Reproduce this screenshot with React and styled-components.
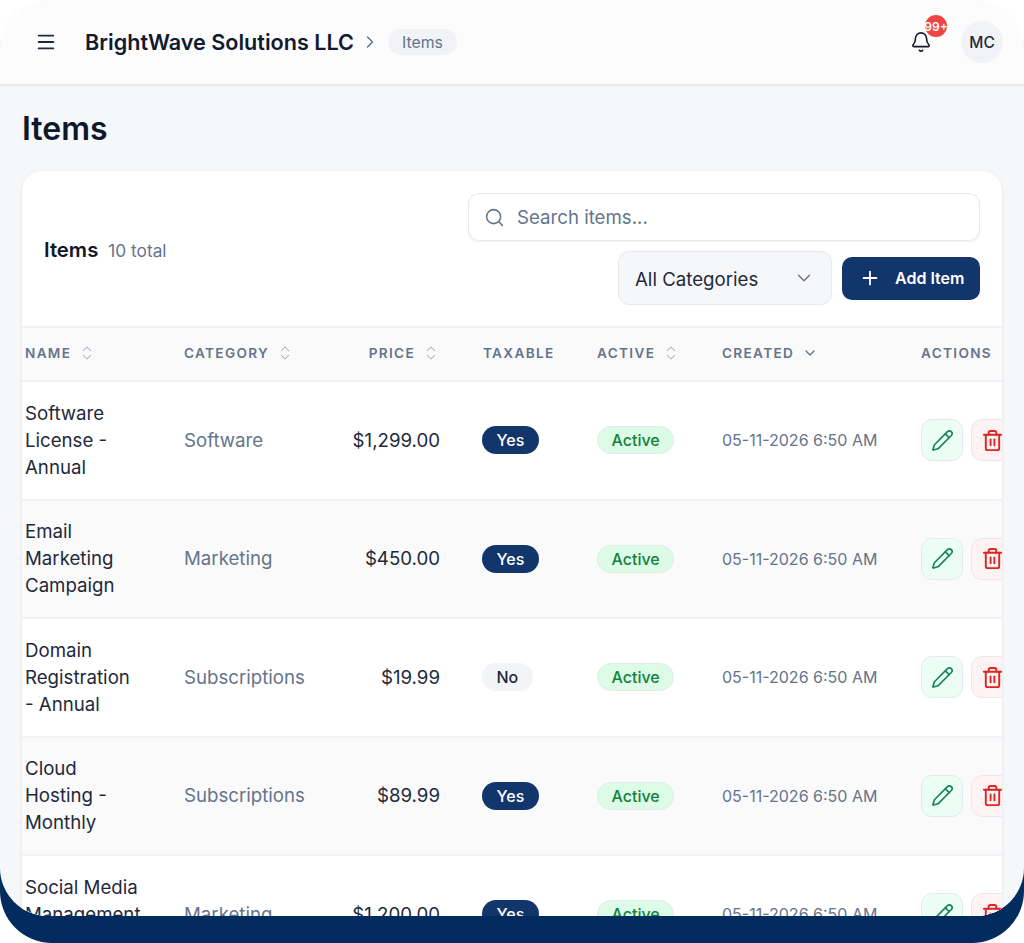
import styled, { createGlobalStyle } from 'styled-components'
import { Bell, ChevronDown, ChevronRight, ChevronsUpDown, Menu, Pencil, Plus, Search, Trash2 } from 'lucide-react'

const GlobalStyle = createGlobalStyle`
  html, body {
    margin: 0;
    padding: 0;
    background: #fff;
    font-family: Inter, "Liberation Sans", sans-serif;
  }
  * {
    box-sizing: border-box;
  }
`

const Device = styled.div`
  width: 1024px;
  height: 943px;
  overflow: hidden;
  border-radius: 0 0 52px 52px;
  background: linear-gradient(to bottom, #fff 0 50%, #032c5e 50% 100%);
`

const Screen = styled.div`
  height: 916px;
  overflow: hidden;
  border-radius: 48px;
  background: #f6f7f9;
`

const TopBar = styled.header`
  height: 84px;
  display: flex;
  align-items: center;
  padding: 0 21px 0 35px;
  background: #fcfcfd;
  box-shadow: 0 1px 3px rgba(30, 41, 59, 0.14);
`

const MenuButton = styled.span`
  display: flex;
  width: 50px;
  color: #1e293b;
`

const CompanyName = styled.span`
  font-size: 21.6px;
  font-weight: 600;
  color: #111a2e;
`

const Crumb = styled.span`
  display: flex;
  margin: 0 8px 0 6px;
  color: #64748b;
`

const CrumbChip = styled.span`
  height: 26px;
  padding: 0 14px;
  display: flex;
  align-items: center;
  border-radius: 13px;
  background: #f1f3f7;
  color: #64748b;
  font-size: 15.8px;
`

const TopActions = styled.div`
  margin-left: auto;
  display: flex;
  align-items: center;
  gap: 29px;
`

const BellWrap = styled.span`
  position: relative;
  display: flex;
  color: #111a2e;
`

const BellBadge = styled.span`
  position: absolute;
  top: -16px;
  left: 15px;
  width: 22px;
  height: 22px;
  display: flex;
  align-items: center;
  justify-content: center;
  border-radius: 50%;
  background: #ef4444;
  color: #fff;
  font-size: 12px;
  font-weight: 600;
  white-space: nowrap;
`

const Avatar = styled.span`
  width: 42px;
  height: 42px;
  display: flex;
  align-items: center;
  justify-content: center;
  border-radius: 50%;
  background: #f1f3f7;
  color: #1e293b;
  font-size: 15.5px;
  font-weight: 500;
`

const Main = styled.main`
  padding: 0 22px;
`

const PageTitle = styled.h1`
  height: 87px;
  margin: 0;
  padding-top: 2px;
  display: flex;
  align-items: center;
  font-size: 32px;
  font-weight: 600;
  color: #0f172a;
`

const Card = styled.section`
  overflow: hidden;
  border-radius: 20px 20px 0 0;
  background: #fff;
  box-shadow: 0 1px 3px rgba(30, 41, 59, 0.12);
`

const Toolbar = styled.div`
  height: 155px;
  display: flex;
  align-items: center;
  justify-content: space-between;
  padding: 0 22px;
`

const TitleGroup = styled.div`
  margin-top: 2px;
  display: flex;
  align-items: baseline;
  gap: 10px;
`

const CardTitle = styled.span`
  font-size: 20.3px;
  font-weight: 600;
  color: #0f172a;
`

const Count = styled.span`
  font-size: 17.3px;
  color: #64748b;
`

const Controls = styled.div`
  width: 512px;
  display: flex;
  flex-direction: column;
  align-items: flex-end;
  gap: 10px;
`

const SearchBox = styled.div`
  width: 100%;
  height: 48px;
  display: flex;
  align-items: center;
  gap: 12px;
  padding: 1px 15px 0;
  border: 1px solid #e6e9ef;
  border-radius: 11px;
  background: #fff;
  color: #64748b;
  font-size: 18.67px;
  box-shadow: 0 1px 2px rgba(30, 41, 59, 0.06);
`

const ControlRow = styled.div`
  display: flex;
  align-items: center;
  gap: 10px;
`

const CategorySelect = styled.div`
  width: 214px;
  height: 54px;
  display: flex;
  align-items: center;
  justify-content: space-between;
  padding: 3px 16px 0 16px;
  border: 1px solid #e6e9ef;
  border-radius: 11px;
  background: #f6f7f9;
  color: #1e293b;
  font-size: 18.67px;

  svg {
    margin-top: -2px;
    color: #64748b;
  }
`

const AddButton = styled.button`
  width: 138px;
  height: 43px;
  margin-top: 1px;
  display: flex;
  align-items: center;
  gap: 14px;
  padding: 0 0 0 17px;
  border: 0;
  border-radius: 10px;
  background: #12356b;
  color: #fff;
  font-family: inherit;
  font-size: 16px;
  font-weight: 600;
`

const Row = styled.div`
  display: grid;
  grid-template-columns: 159px 150px 149px 114px 125px 199px 120px;
  align-items: center;
  width: 1019px;
  padding-left: 3px;
  height: ${({ $head }) => ($head ? '56px' : '118.5px')};
  padding-bottom: ${({ $head }) => ($head ? '3px' : '0')};
  border-top: ${({ $head }) => ($head ? '2px solid #f1f2f6' : '0')};
  border-bottom: 2px solid #f1f2f6;
  background: ${({ $alt }) => ($alt ? '#fafafb' : '#fff')};
`

const HeadCell = styled.div`
  display: flex;
  align-items: center;
  justify-content: ${({ $right }) => ($right ? 'flex-end' : 'flex-start')};
  gap: 7px;
  padding-right: ${({ $right }) => ($right ? '43px' : '0')};
  font-size: 13.6px;
  font-weight: 600;
  letter-spacing: 1.33px;
  color: #64748b;
`

const SortIcon = styled(ChevronsUpDown).attrs({ size: 18, strokeWidth: 1.4 })`
  color: #a3adbd;
`

const SortedIcon = styled(ChevronDown).attrs({ size: 16, strokeWidth: 2 })`
  margin-left: 1px;
  color: #64748b;
`

const ItemName = styled.div`
  width: 116px;
  font-size: 18.67px;
  line-height: 27px;
  color: #1e293b;
`

const Category = styled.div`
  font-size: 18.67px;
  color: #64748b;
`

const Price = styled.div`
  padding-right: 43px;
  text-align: right;
  font-size: 18.67px;
  color: #1e293b;
`

const Pill = styled.span`
  height: 28px;
  display: inline-flex;
  align-items: center;
  margin-left: ${({ $tone }) => ($tone === 'active' ? '0' : '-1px')};
  padding: 0 13.5px;
  border-radius: 14px;
  font-size: 16px;
  font-weight: 500;
  border: 1px solid ${({ $tone }) => ($tone === 'active' ? '#e2ebe6' : 'transparent')};
  background: ${({ $tone }) => ({ yes: '#12356b', no: '#f3f4f7', active: '#dcfce7' })[$tone]};
  color: ${({ $tone }) => ({ yes: '#fff', no: '#1e293b', active: '#15803d' })[$tone]};
`

const PillCell = styled.div`
  display: flex;
  align-items: center;
`

const DateCell = styled.div`
  font-size: 16px;
  color: #64748b;
`

const Actions = styled.div`
  display: flex;
  gap: 8px;
`

const IconButton = styled.span`
  width: 42px;
  height: 42px;
  flex: none;
  display: flex;
  align-items: center;
  justify-content: center;
  border: 1px solid #e6e9ef;
  border-radius: 11px;
  background: ${({ $danger }) => ($danger ? '#fef2f2' : '#ecfdf5')};
  color: ${({ $danger }) => ($danger ? '#dc2626' : '#15855a')};
`

const items = [
  { name: 'Software License - Annual', category: 'Software', price: '$1,299.00', taxable: true },
  { name: 'Email Marketing Campaign', category: 'Marketing', price: '$450.00', taxable: true },
  { name: 'Domain Registration - Annual', category: 'Subscriptions', price: '$19.99', taxable: false },
  { name: 'Cloud Hosting - Monthly', category: 'Subscriptions', price: '$89.99', taxable: true },
  { name: 'Social Media Management - Monthly', category: 'Marketing', price: '$1,200.00', taxable: true },
]

const App = () => {
  return (
    <>
      <GlobalStyle />
      <Device>
        <Screen>
          <TopBar>
            <MenuButton>
              <Menu size={22} strokeWidth={2} />
            </MenuButton>
            <CompanyName>BrightWave Solutions LLC</CompanyName>
            <Crumb>
              <ChevronRight size={20} strokeWidth={1.75} />
            </Crumb>
            <CrumbChip>Items</CrumbChip>
            <TopActions>
              <BellWrap>
                <Bell size={22} strokeWidth={1.75} />
                <BellBadge>99+</BellBadge>
              </BellWrap>
              <Avatar>MC</Avatar>
            </TopActions>
          </TopBar>

          <Main>
            <PageTitle>Items</PageTitle>
            <Card>
              <Toolbar>
                <TitleGroup>
                  <CardTitle>Items</CardTitle>
                  <Count>10 total</Count>
                </TitleGroup>
                <Controls>
                  <SearchBox>
                    <Search size={21} strokeWidth={1.75} />
                    Search items...
                  </SearchBox>
                  <ControlRow>
                    <CategorySelect>
                      All Categories
                      <ChevronDown size={22} strokeWidth={1.5} />
                    </CategorySelect>
                    <AddButton>
                      <Plus size={22} strokeWidth={2} />
                      Add Item
                    </AddButton>
                  </ControlRow>
                </Controls>
              </Toolbar>

              <Row $head $alt>
                <HeadCell>NAME <SortIcon /></HeadCell>
                <HeadCell>CATEGORY <SortIcon /></HeadCell>
                <HeadCell $right>PRICE <SortIcon /></HeadCell>
                <HeadCell>TAXABLE</HeadCell>
                <HeadCell>ACTIVE <SortIcon /></HeadCell>
                <HeadCell>CREATED <SortedIcon /></HeadCell>
                <HeadCell>ACTIONS</HeadCell>
              </Row>

              {items.map((item, index) => (
                <Row key={item.name} $alt={index % 2 === 1}>
                  <ItemName>{item.name}</ItemName>
                  <Category>{item.category}</Category>
                  <Price>{item.price}</Price>
                  <PillCell>
                    <Pill $tone={item.taxable ? 'yes' : 'no'}>{item.taxable ? 'Yes' : 'No'}</Pill>
                  </PillCell>
                  <PillCell>
                    <Pill $tone="active">Active</Pill>
                  </PillCell>
                  <DateCell>05-11-2026 6:50 AM</DateCell>
                  <Actions>
                    <IconButton>
                      <Pencil size={23} strokeWidth={1.75} />
                    </IconButton>
                    <IconButton $danger>
                      <Trash2 size={23} strokeWidth={2} />
                    </IconButton>
                  </Actions>
                </Row>
              ))}
            </Card>
          </Main>
        </Screen>
      </Device>
    </>
  )
}

export default App
